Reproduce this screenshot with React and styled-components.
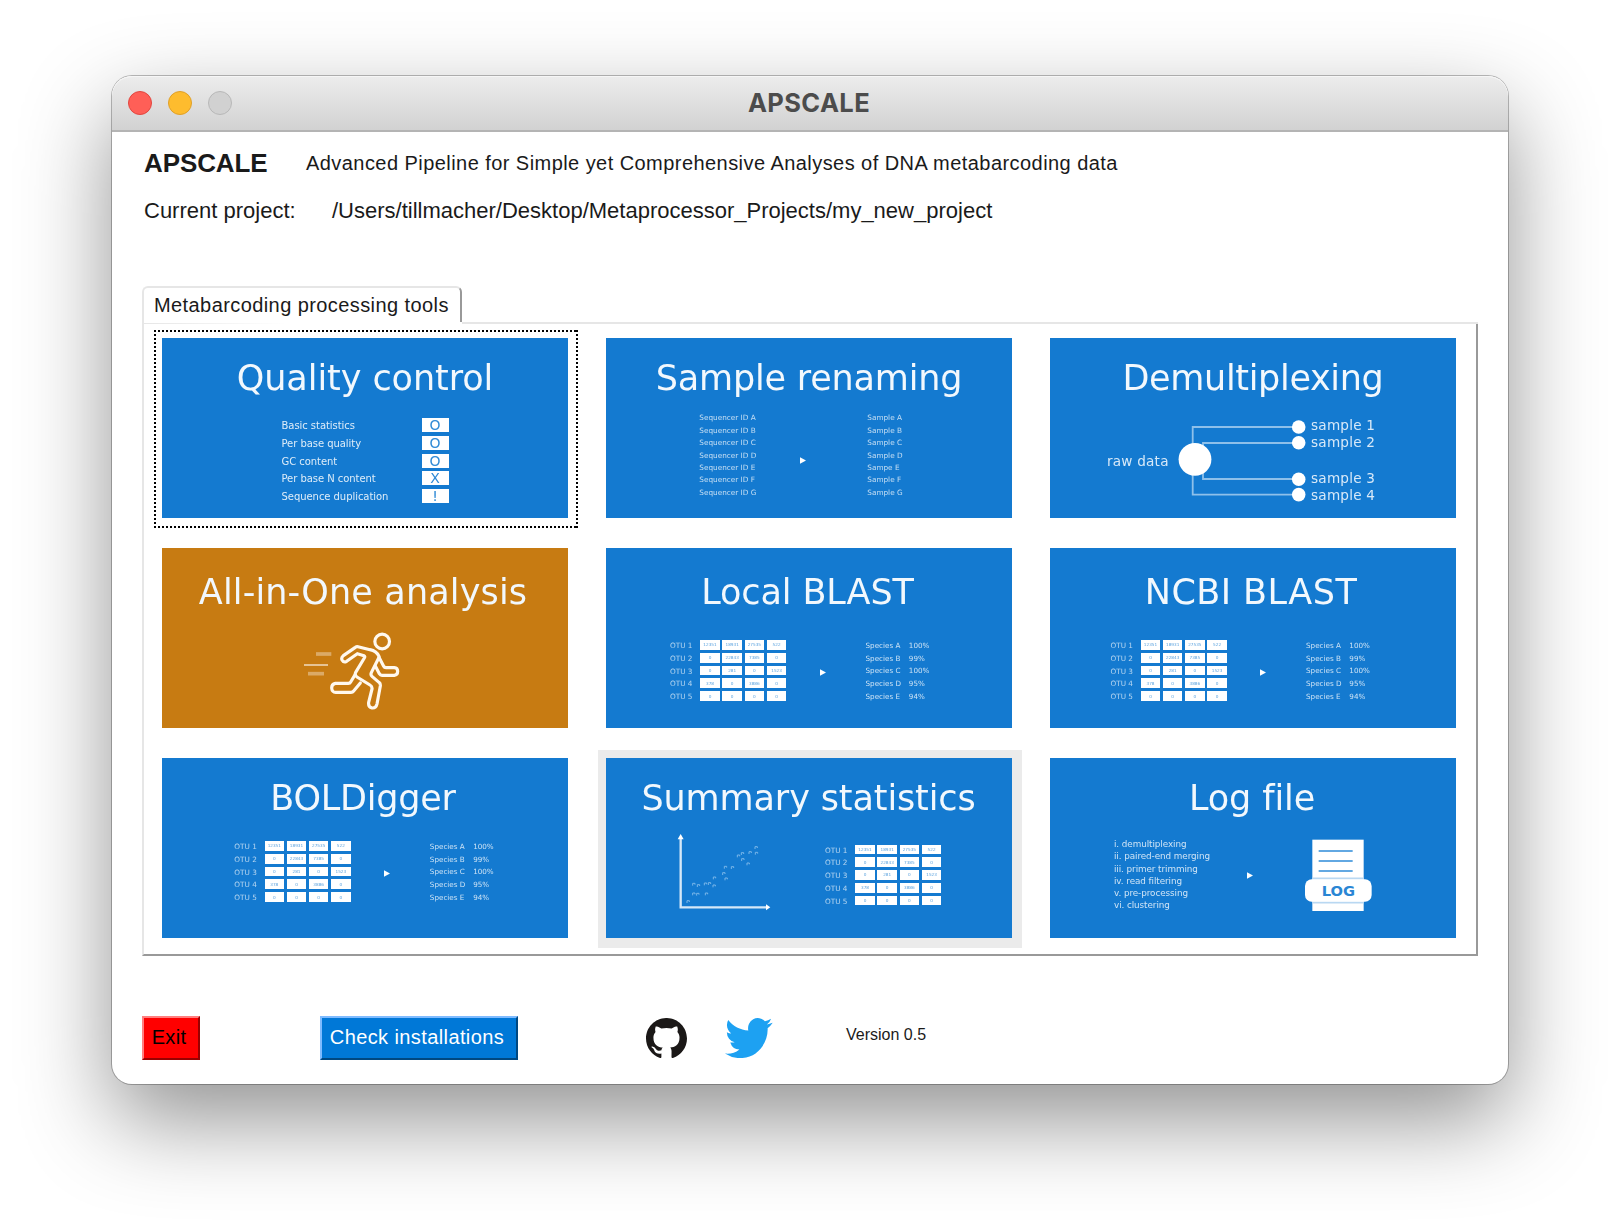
import React from "react";
import styled, { createGlobalStyle, css } from "styled-components";

const BLUE = "#147ad0";
const ORANGE = "#c77b12";
const SANS = `"Liberation Sans", Arial, sans-serif`;
const VERDANA = `"DejaVu Sans", Verdana, sans-serif`;

const GlobalStyle = createGlobalStyle`
  * { box-sizing: border-box; }
  body { margin: 0; background: #fff; font-family: ${SANS}; color: #1a1a1a; }
`;

/* ---------- window ---------- */

const Desktop = styled.div`
  width: 1620px;
  height: 1232px;
  padding: 76px 112px 148px;
  background: #fff;
  overflow: hidden;
`;

const Window = styled.main`
  display: flex;
  flex-direction: column;
  width: 1396px;
  height: 1008px;
  border-radius: 20px;
  background: #fff;
  box-shadow: 0 0 0 1px rgba(0, 0, 0, 0.26), 0 36px 90px rgba(0, 0, 0, 0.43);
`;

const TitleBar = styled.header`
  display: grid;
  grid-template-columns: 118px 1fr 120px;
  align-items: center;
  height: 56px;
  padding: 0 16px;
  border-radius: 20px 20px 0 0;
  border-bottom: 2px solid #b4b4b4;
  background: linear-gradient(#ededed, #d2d2d2);
  box-shadow: inset 0 1px 0 #f6f6f6;
`;

const Lights = styled.div`
  display: flex;
  gap: 16px;
`;

const Light = styled.span`
  width: 24px;
  height: 24px;
  border-radius: 50%;
  background: ${(p) => p.$fill};
  border: 1px solid ${(p) => p.$edge};
`;

const WindowTitle = styled.h1`
  margin: 0;
  text-align: center;
  font: 700 25.5px/32px Inter, ${SANS};
  letter-spacing: 0.4px;
  color: #4c4c4c;
`;

const Content = styled.div`
  display: flex;
  flex-direction: column;
  padding: 15px 30px 0;
`;

/* ---------- heading ---------- */

const HeadRow = styled.div`
  display: flex;
  align-items: center;
  height: 32px;
  padding-left: 2px;
  margin-bottom: ${(p) => p.$after || 0}px;
  white-space: nowrap;
`;

const Brand = styled.strong`
  width: 162px;
  font-size: 26px;
  letter-spacing: -0.1px;
`;

const Tagline = styled.span`
  font-size: 20px;
  letter-spacing: ${(p) => p.$track || 0}px;
`;

const Field = styled.span`
  font-size: 22px;
  width: ${(p) => (p.$w ? p.$w + "px" : "auto")};
`;

/* ---------- notebook ---------- */

const Tab = styled.div`
  display: flex;
  align-items: center;
  width: 320px;
  height: 36px;
  padding-left: 10px;
  border: 2px solid #e6e6e6;
  border-right-color: #999;
  border-bottom: 0;
  border-radius: 6px 6px 0 0;
  font-size: 20px;
  letter-spacing: ${(p) => p.$track}px;
  white-space: nowrap;
`;

const TabEdge = styled.div`
  display: grid;
  grid-template-columns: 2px 318px 1fr;
  height: 2px;
`;

const Edge = styled.span`
  background: ${(p) => p.$bg};
`;

const Panel = styled.section`
  display: grid;
  grid-template-columns: repeat(3, 424px);
  grid-auto-rows: 198px;
  gap: 12px 20px;
  width: 1336px;
  height: 632px;
  padding: 6px 10px 0;
  border: solid;
  border-width: 0 2px 2px;
  border-color: transparent #999 #999 #e6e6e6;
`;

const TileButton = styled.div`
  position: relative;
  padding: 8px 10px 10px 8px;
  background: ${(p) => (p.$hover ? "#ebebeb" : "transparent")};
`;

const dots = (dir) => `repeating-linear-gradient(${dir}, #000 0 2px, transparent 2px 4px)`;

const FocusRing = styled.span`
  position: absolute;
  inset: 0;
  background:
    ${dots("to right")} 0 0 / 100% 2px no-repeat,
    ${dots("to right")} 0 100% / 100% 2px no-repeat,
    ${dots("to bottom")} 0 0 / 2px 100% no-repeat,
    ${dots("to bottom")} 100% 0 / 2px 100% no-repeat;
`;

const Tile = styled.article`
  height: 180px;
  background: ${(p) => p.$bg || BLUE};
  color: #fff;
  font-family: ${VERDANA};
`;

const TileTitle = styled.h2`
  margin: 0;
  height: 64px;
  padding-top: ${(p) => p.$drop || 20}px;
  padding-right: ${(p) => p.$nudge || 0}px;
  text-align: center;
  font-weight: 400;
  font-size: 35px;
  line-height: 40px;
  letter-spacing: ${(p) => p.$track || 0}px;
  font-variant-ligatures: none;
  color: #f2f8fd;
  white-space: nowrap;
  filter: blur(0.35px);
`;

const Art = styled.div`
  display: flex;
  align-items: flex-start;
  padding-left: ${(p) => p.$x}px;
  padding-top: ${(p) => p.$y}px;
  filter: blur(0.45px);
`;

const Lines = styled.div`
  width: ${(p) => p.$w}px;
  font-size: ${(p) => p.$size}px;
  line-height: ${(p) => p.$pitch}px;
  letter-spacing: ${(p) => p.$track || 0}px;
  color: rgba(255, 255, 255, ${(p) => p.$alpha || 0.78});
  white-space: nowrap;
`;

const Line = styled.div`
  height: ${(p) => p.$pitch}px;
`;

const ArrowSvg = styled.svg`
  width: 6px;
  height: 7px;
  margin-top: ${(p) => p.$top}px;
  margin-right: ${(p) => p.$after}px;
  flex: none;
`;

const Checks = styled.div`
  display: grid;
  gap: 3.7px;
  padding-top: 1px;
`;

const Check = styled.span`
  display: grid;
  place-items: center;
  width: 27px;
  height: 14px;
  background: #fff;
  color: #2f8ad6;
  font-size: 14px;
  line-height: 14px;
`;

const Cells = styled.div`
  display: grid;
  grid-template-columns: repeat(4, 19.4px);
  grid-auto-rows: 9.8px;
  gap: 3px 2.8px;
`;

const Cell = styled.span`
  display: grid;
  place-items: center;
  background: #fff;
  color: #5ea4df;
  font-size: 4.2px;
  line-height: 9px;
`;

const Drawing = styled.svg`
  display: block;
  width: 406px;
  height: 116px;
  font-family: ${VERDANA};
  filter: blur(0.4px);
`;

const Figure = styled.svg`
  flex: none;
  font-family: ${VERDANA};
`;

const Gap = styled.span`
  flex: none;
  width: ${(p) => p.$w}px;
`;

const Offset = styled.div`
  display: flex;
  padding-top: ${(p) => p.$y}px;
`;

/* ---------- footer ---------- */

const Footer = styled.footer`
  display: flex;
  align-items: flex-start;
  height: 44px;
  margin-top: 60px;
`;

const bevel = css`
  border: 2px solid;
  border-color: ${(p) => p.$light} ${(p) => p.$dark} ${(p) => p.$dark} ${(p) => p.$light};
`;

const Button = styled.button`
  ${bevel}
  width: ${(p) => p.$w}px;
  height: 44px;
  margin: 0 ${(p) => p.$after}px 0 0;
  padding: 0 4px 2px 0;
  background: ${(p) => p.$bg};
  color: ${(p) => p.$fg};
  font: 20px ${SANS};
  letter-spacing: ${(p) => p.$track || 0}px;
  white-space: nowrap;
`;

const Logo = styled.svg`
  width: ${(p) => p.$w}px;
  height: 40px;
  margin: 2px ${(p) => p.$after}px 0 0;
`;

const Version = styled.span`
  font-size: 16px;
  line-height: 37px;
`;

/* ---------- tile illustrations ---------- */

const List = ({ items, pitch, ...rest }) => (
  <Lines $pitch={pitch} {...rest}>
    {items.map((t, i) => (
      <Line key={i} $pitch={pitch}>{t}</Line>
    ))}
  </Lines>
);

const Arrow = ({ top, after }) => (
  <ArrowSvg viewBox="0 0 6 7" $top={top} $after={after}>
    <path d="M0 0.2 L6 3.5 L0 6.8 Z" fill="#fff" />
  </ArrowSvg>
);

const COUNTS = [
  ["12351", "18931", "27535", "522"],
  ["0", "22843", "7385", "0"],
  ["0", "281", "0", "1523"],
  ["378", "0", "3886", "0"],
  ["0", "0", "0", "0"],
];

const OtuTable = () => (
  <>
    <List
      items={[1, 2, 3, 4, 5].map((n) => `OTU ${n}`)}
      pitch={12.8}
      $w={30.3}
      $size={7.3}
      $alpha={0.68}
    />
    <Cells>
      {COUNTS.flat().map((c, i) => (
        <Cell key={i}>{c}</Cell>
      ))}
    </Cells>
  </>
);

const Blast = ({ x, y }) => (
  <Art $x={x} $y={y}>
    <OtuTable />
    <Gap $w={33.5} />
    <Arrow top={29} after={39.8} />
    <List
      items={["A", "B", "C", "D", "E"].map((s) => `Species ${s}`)}
      pitch={12.7}
      $w={43.3}
      $size={7.2}
    />
    <List items={["100%", "99%", "100%", "95%", "94%"]} pitch={12.7} $w={30} $size={7.2} />
  </Art>
);

const QualityArt = () => (
  <Art $x={119.5} $y={15.3}>
    <List
      items={[
        "Basic statistics",
        "Per base quality",
        "GC content",
        "Per base N content",
        "Sequence duplication",
      ]}
      pitch={17.7}
      $w={140}
      $size={10}
      $track={-0.05}
      $alpha={0.86}
    />
    <Checks>
      {["O", "O", "O", "X", "!"].map((c, i) => (
        <Check key={i}>{c}</Check>
      ))}
    </Checks>
  </Art>
);

const LETTERS = ["A", "B", "C", "D", "E", "F", "G"];

const RenamingArt = () => (
  <Art $x={93.3} $y={10.3}>
    <List
      items={LETTERS.map((l) => `Sequencer ID ${l}`)}
      pitch={12.45}
      $w={100.7}
      $size={7.3}
      $alpha={0.74}
    />
    <Arrow top={45} after={61.3} />
    <List
      items={LETTERS.map((l) => (l === "E" ? "Sampe E" : `Sample ${l}`))}
      pitch={12.45}
      $w={60}
      $size={7.3}
      $alpha={0.74}
    />
  </Art>
);

const DemuxArt = () => (
  <Drawing viewBox="0 64 406 116">
    <g fill="none" stroke="#8ec0ea" strokeWidth="1.8">
      <path d="M248.7 89H142.7V156.7H248.7" />
      <path d="M248.7 105H153V141H248.7" />
    </g>
    <g fill="#fff">
      <circle cx="145" cy="121.3" r="16.4" />
      <circle cx="248.7" cy="89" r="6.8" />
      <circle cx="248.7" cy="104.8" r="6.8" />
      <circle cx="248.7" cy="141.2" r="6.8" />
      <circle cx="248.7" cy="156.6" r="6.8" />
    </g>
    <g fill="#d8e9f8" fontSize="13.6">
      <text x="57" y="127.6" textLength="61.5">raw data</text>
      <text x="261" y="92.2" textLength="64">sample 1</text>
      <text x="261" y="109" textLength="64">sample 2</text>
      <text x="261" y="145.2" textLength="64">sample 3</text>
      <text x="261" y="161.7" textLength="64">sample 4</text>
    </g>
  </Drawing>
);

const RunnerArt = () => (
  <Drawing viewBox="66 246 1218 348">
    <g stroke="#fff">
      <path d="M528 372H574" strokeWidth="11" opacity="0.36" />
      <path d="M492 405H564" strokeWidth="6" opacity="0.55" />
      <path d="M504 431H552" strokeWidth="11" opacity="0.36" />
    </g>
    <g fill="none" stroke="#fff8ee" strokeWidth="9.5" strokeLinejoin="round" strokeLinecap="round">
      <circle cx="726.5" cy="334.5" r="22" />
      <path d="M717 379C712 368 704 362 690 359L654 350Q650 349 646 352L610 377Q603 383 606 390Q611 399 620 394L652 371L672 377Q676 379 673 384L647 427Q643 435 651 441L690 465Q697 469 696 477L686 517Q684 531 696 534Q708 535 711 522L721 468Q722 461 717 457L696 439Q691 435 694 428L716 384" />
      <path d="M717 382L731 409Q733 413 738 413H763Q773 414 773 424Q773 435 763 436H726Q721 436 718 431L706 408" />
      <path d="M644 436L632 456Q630 460 625 460H586Q575 462 575 474Q576 487 587 487H633Q638 487 641 483L661 459" />
    </g>
  </Drawing>
);

const POINTS = [
  [294, 485], [311, 462], [323, 463], [349, 462], [311, 433], [325, 437], [346, 432], [358, 431],
  [373, 414], [372, 438], [401, 401], [408, 417], [406, 382], [427, 383], [445, 348], [457, 341],
  [458, 359], [474, 372], [480, 338], [498, 323], [499, 340],
];

const SummaryArt = () => (
  <Art $x={68} $y={9}>
    <Figure width="98" height="82" viewBox="252 273 294 246">
      <g fill="none" stroke="#d5e8f8" strokeWidth="7">
        <path d="M272 294V502H532" />
      </g>
      <g fill="#fff">
        <path d="M263 298L272 282L281 298Z" />
        <path d="M528 493L541 502L528 511Z" />
      </g>
      <g fill="none" stroke="#7ab6e8" strokeWidth="3">
        {POINTS.map(([x, y]) => (
          <path key={`${x}-${y}`} d={`M${x - 3} ${y + 4}V${y - 3}H${x + 4}V${y + 1}`} />
        ))}
      </g>
    </Figure>
    <Gap $w={53} />
    <Offset $y={13.5}>
      <OtuTable />
    </Offset>
  </Art>
);

const LogArt = () => (
  <Art $x={64} $y={14}>
    <Offset $y={2}>
      <List
        items={[
          "i. demultiplexing",
          "ii. paired-end merging",
          "iii. primer trimming",
          "iv. read filtering",
          "v. pre-processing",
          "vi. clustering",
        ]}
        pitch={12.3}
        $w={132.7}
        $size={8.8}
        $track={-0.07}
        $alpha={0.8}
      />
    </Offset>
    <Arrow top={35.5} after={49.3} />
    <Figure width="74" height="80" viewBox="816 288 222 240">
      <rect x="847" y="299" width="154" height="214" fill="#fff" />
      <path d="M866 333H968M866 363H968M866 393H968" stroke="#62a8e2" strokeWidth="6" />
      <path d="M847 416H1001M847 487H1001" stroke="#b9d8f2" strokeWidth="7" />
      <rect x="825" y="418" width="200" height="67" rx="20" fill="#fff" />
      <text x="925" y="467" textAnchor="middle" fontSize="44" fontWeight="700" fill="#2a86d4">
        LOG
      </text>
    </Figure>
  </Art>
);

const TILES = [
  { title: "Quality control", art: <QualityArt />, focus: true, track: -0.07 },
  { title: "Sample renaming", art: <RenamingArt />, track: -0.2 },
  { title: "Demultiplexing", art: <DemuxArt />, track: -0.33 },
  { title: "All-in-One analysis", art: <RunnerArt />, bg: ORANGE, drop: 24, track: 0.14, nudge: 4 },
  { title: "Local BLAST", art: <Blast x={64} y={28} />, drop: 24, track: -0.1, nudge: 3 },
  { title: "NCBI BLAST", art: <Blast x={60.5} y={28} />, drop: 24, track: 0.45, nudge: 4 },
  { title: "BOLDigger", art: <Blast x={72.3} y={19} />, track: -0.22, nudge: 4 },
  { title: "Summary statistics", art: <SummaryArt />, hover: true, track: -0.12, nudge: 1 },
  { title: "Log file", art: <LogArt />, track: -0.1, nudge: 2 },
];

const GITHUB =
  "M12 .297c-6.63 0-12 5.373-12 12 0 5.303 3.438 9.8 8.205 11.385.6.113.82-.258.82-.577 0-.285-.01-1.04-.015-2.04-3.338.724-4.042-1.61-4.042-1.61C4.422 18.07 3.633 17.7 3.633 17.7c-1.087-.744.084-.729.084-.729 1.205.084 1.838 1.236 1.838 1.236 1.07 1.835 2.809 1.305 3.495.998.108-.776.417-1.305.76-1.605-2.665-.3-5.466-1.332-5.466-5.93 0-1.31.465-2.38 1.235-3.22-.135-.303-.54-1.523.105-3.176 0 0 1.005-.322 3.3 1.23.96-.267 1.98-.399 3-.405 1.02.006 2.04.138 3 .405 2.28-1.552 3.285-1.23 3.285-1.23.645 1.653.24 2.873.12 3.176.765.84 1.23 1.91 1.23 3.22 0 4.61-2.805 5.625-5.475 5.92.42.36.81 1.096.81 2.22 0 1.606-.015 2.896-.015 3.286 0 .315.21.69.825.57C20.565 22.092 24 17.592 24 12.297c0-6.627-5.373-12-12-12";
const TWITTER =
  "M23.953 4.57a10 10 0 01-2.825.775 4.958 4.958 0 002.163-2.723c-.951.555-2.005.959-3.127 1.184a4.92 4.92 0 00-8.384 4.482C7.69 8.095 4.067 6.13 1.64 3.162a4.822 4.822 0 00-.666 2.475c0 1.71.87 3.213 2.188 4.096a4.904 4.904 0 01-2.228-.616v.06a4.923 4.923 0 003.946 4.827 4.996 4.996 0 01-2.212.085 4.936 4.936 0 004.604 3.417 9.867 9.867 0 01-6.102 2.105c-.39 0-.779-.023-1.17-.067a13.995 13.995 0 007.557 2.209c9.053 0 13.998-7.496 13.998-13.985 0-.21 0-.42-.015-.63A9.935 9.935 0 0024 4.59z";

export default function App() {
  return (
    <Desktop>
      <GlobalStyle />
      <Window>
        <TitleBar>
          <Lights>
            <Light $fill="#ff5f57" $edge="#e2463f" />
            <Light $fill="#febc2e" $edge="#e0a028" />
            <Light $fill="#d1d1d1" $edge="#b8b8b8" />
          </Lights>
          <WindowTitle>APSCALE</WindowTitle>
        </TitleBar>
        <Content>
          <HeadRow $after={16}>
            <Brand>APSCALE</Brand>
            <Tagline $track={0.443}>
              Advanced Pipeline for Simple yet Comprehensive Analyses of DNA metabarcoding data
            </Tagline>
          </HeadRow>
          <HeadRow $after={59}>
            <Field $w={188}>Current project:</Field>
            <Field>/Users/tillmacher/Desktop/Metaprocessor_Projects/my_new_project</Field>
          </HeadRow>
          <Tab $track={0.415}>Metabarcoding processing tools</Tab>
          <TabEdge>
            <Edge $bg="#e6e6e6" />
            <Edge $bg="linear-gradient(to right, #e6e6e6, #fff 45%) 0 1px no-repeat" />
            <Edge $bg="#e6e6e6" />
          </TabEdge>
          <Panel>
            {TILES.map((t) => (
              <TileButton key={t.title} $hover={t.hover}>
                <Tile $bg={t.bg}>
                  <TileTitle $drop={t.drop} $track={t.track} $nudge={t.nudge}>
                    {t.title}
                  </TileTitle>
                  {t.art}
                </Tile>
                {t.focus && <FocusRing />}
              </TileButton>
            ))}
          </Panel>
          <Footer>
            <Button
              $w={58}
              $after={120}
              $bg="#ff0000"
              $fg="#000"
              $light="#ff7f7f"
              $dark="#990000"
              $track={0.3}
            >
              Exit
            </Button>
            <Button
              $w={198}
              $after={127.5}
              $bg="#0078d7"
              $fg="#fff"
              $light="#7fbbff"
              $dark="#004881"
              $track={0.4}
            >
              Check installations
            </Button>
            <Logo $w={41} $after={38.5} viewBox="0 0.3 24 23.4" preserveAspectRatio="none">
              <path d={GITHUB} fill="#1b1817" />
            </Logo>
            <Logo $w={47.5} $after={73.5} viewBox="0 2.2 24 19.5" preserveAspectRatio="none">
              <path d={TWITTER} fill="#1da1f2" />
            </Logo>
            <Version>Version 0.5</Version>
          </Footer>
        </Content>
      </Window>
    </Desktop>
  );
}
